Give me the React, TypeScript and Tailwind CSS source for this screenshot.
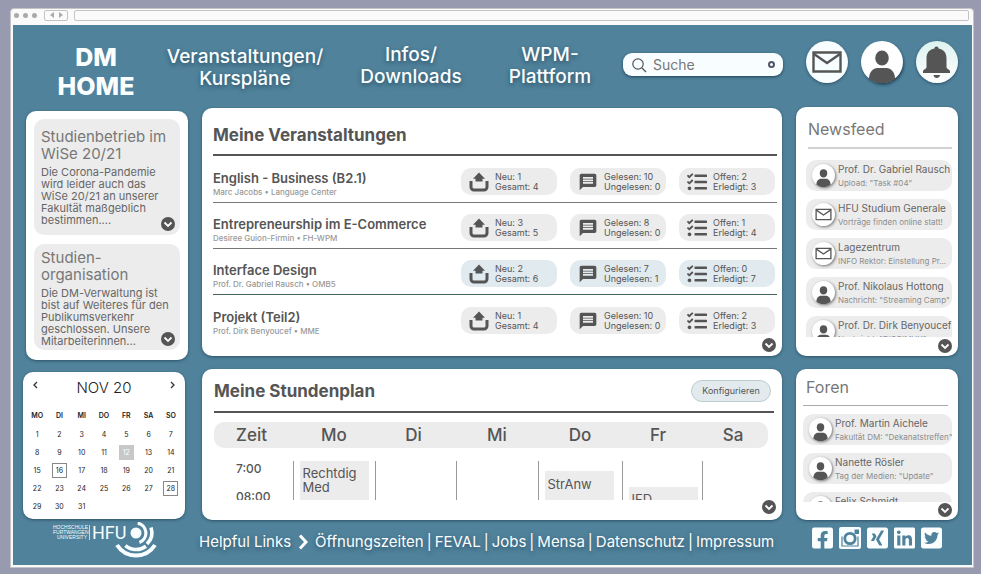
import React from "react";
import { FaFacebookSquare, FaLinkedin, FaTasks, FaTwitterSquare, FaXingSquare } from "react-icons/fa";
import { MdMessage } from "react-icons/md";

const cardClass = "rounded-[10px] bg-white shadow-[0_1px_3px_rgba(20,50,70,0.6)]";

function UserIcon({ className }: { className: string }) {
  return (
    <svg viewBox="0 0 42 42" className={className} aria-hidden="true">
      <ellipse cx="21" cy="17" rx="6.8" ry="7.6" fill="#555" />
      <path d="M8 38c0-7 4-11 8.500-11h9c4.500 0 8.500 4 8.500 11a21 21 0 0 1-26 0z" fill="#555" />
    </svg>
  );
}

function MailIcon({ className }: { className: string }) {
  return (
    <svg viewBox="0 0 42 42" className={className} aria-hidden="true" fill="none" stroke="#555" strokeWidth="2.4">
      <path d="M7.500 11.500h27v19h-27z" />
      <path d="M8 13l13 9L34 13" />
    </svg>
  );
}

function BellIcon({ className }: { className: string }) {
  return (
    <svg viewBox="0 0 42 42" className={className} aria-hidden="true" fill="#555">
      <path d="M20.500 5.500c1.300 0 2 .8 2 2C28 8.500 30.500 12 30.500 17.500V26c0 2 3 2.500 3.500 4v2H7v-2c.5-1.500 3.500-2 3.500-4v-8.500C10.500 12 13 8.500 18.500 7.500c0-1.200.7-2 2-2z" />
      <path d="M17.500 34h6.500c-.3 2-1.600 3-3.200 3s-3-1-3.300-3z" />
    </svg>
  );
}

function UploadIcon() {
  return (
    <svg viewBox="0 0 20 20" className="size-5 shrink-0" aria-hidden="true">
      <path d="M10 0.500l6 6.200h-2.500v2.800h-7V6.700H4z" fill="#555" />
      <path d="M2 9v6a3 3 0 0 0 3 3h10a3 3 0 0 0 3-3V9" fill="none" stroke="#555" strokeWidth="3" />
    </svg>
  );
}

function MoreButton({ label, className = "" }: { label: string; className?: string }) {
  return (
    <button type="button" aria-label={label} className={`flex size-[14px] shrink-0 items-center justify-center rounded-full bg-[#555] ${className}`}>
      <svg viewBox="0 0 14 14" className="size-[14px]" fill="none" stroke="#fff" strokeWidth="1.800" aria-hidden="true">
        <path d="M3.500 5.500L7 9l3.500-3.500" />
      </svg>
    </button>
  );
}

const navItems = [
  { lines: ["Veranstaltungen/", "Kurspläne"], className: "w-[160px] pt-[2px]" },
  { lines: ["Infos/", "Downloads"], className: "w-[172px]" },
  { lines: ["WPM-", "Plattform"], className: "w-[106px]" },
];

function Header() {
  return (
    <header className="flex h-[82px] items-start pl-[14px] pr-[14px] text-[#fbfeff]">
      <a href="#home" className="w-[138px] pt-[18px] text-center text-[25px] font-extrabold leading-[29px]">
        DM
        <br />
        HOME
      </a>
      <nav className="flex pt-[19px] text-center text-[19px] font-medium leading-[22px] [text-shadow:0_2px_4px_rgba(20,50,70,0.6)]">
        {navItems.map((item) => (
          <a key={item.lines[0]} href="#nav" className={item.className}>
            {item.lines[0]}
            <br />
            {item.lines[1]}
          </a>
        ))}
      </nav>
      <label className="ml-5 mt-7 flex h-[23px] min-w-[160px] flex-1 items-center gap-[6px] rounded-[9px] bg-[#f8fdff] px-2 shadow-[0_1px_3px_rgba(20,50,70,0.8)]">
        <svg viewBox="0 0 16 16" className="size-4 shrink-0" fill="none" stroke="#555" strokeWidth="1.200" aria-hidden="true">
          <circle cx="7" cy="7" r="5.200" />
          <path d="M11 11l4 4" />
        </svg>
        <input type="text" aria-label="Suche" placeholder="Suche" className="w-0 flex-1 bg-transparent text-[14px] leading-5 text-[#666] outline-none placeholder:text-[#777]" />
        <span className="size-[7px] rounded-full border-2 border-[#556]" />
      </label>
      <div className="ml-[23px] flex items-center gap-[13px] pt-4">
        <button type="button" aria-label="Nachrichten" className="size-[42px] rounded-full bg-[#f8fdff] shadow-[0_1px_3px_rgba(20,50,70,0.6)]">
          <MailIcon className="size-[42px]" />
        </button>
        <button type="button" aria-label="Profil" className="size-[42px] rounded-full bg-white shadow-[1px_2px_3px_rgba(20,50,70,0.7)]">
          <UserIcon className="size-[42px]" />
        </button>
        <button type="button" aria-label="Mitteilungen" className="size-[42px] rounded-full bg-linear-to-b from-[#dcf2ef] to-white shadow-[0_1px_3px_rgba(20,50,70,0.6)]">
          <BellIcon className="size-[42px]" />
        </button>
      </div>
    </header>
  );
}

const notices = [
  {
    title: ["Studienbetrieb im", "WiSe 20/21"],
    body: ["Die Corona-Pandemie", "wird leider auch das", "WiSe 20/21 an unserer", "Fakultät maßgeblich", "bestimmen...."],
    className: "h-[116px]",
  },
  {
    title: ["Studien-", "organisation"],
    body: ["Die DM-Verwaltung ist", "bist auf Weiteres für den", "Publikumsverkehr", "geschlossen. Unsere", "Mitarbeiterinnen..."],
    className: "h-[106px]",
  },
];

function Notices() {
  return (
    <section className={`flex w-[162px] flex-col gap-[9px] self-end px-2 pb-[10px] pt-2 ${cardClass}`}>
      {notices.map((n, i) => (
        <article key={n.title[0]} className={`relative whitespace-nowrap rounded-[10px] bg-[#ececec] pl-[7px] ${i === 0 ? "pt-[9px]" : "pt-[5px]"} ${n.className}`}>
          <h2 className="text-[15px] leading-[17px] text-[#777]">
            {n.title[0]}
            <br />
            {n.title[1]}
          </h2>
          <p className="pt-1 text-[11px] leading-[12px] text-[#666]">
            {n.body.map((line) => (
              <span key={line} className="block">
                {line}
              </span>
            ))}
          </p>
          <MoreButton label="Mehr lesen" className="absolute bottom-1 right-[5px]" />
        </article>
      ))}
    </section>
  );
}

const weekdays = ["MO", "DI", "MI", "DO", "FR", "SA", "SO"];
const weeks = [0, 1, 2, 3, 4].map((w) => weekdays.map((_, d) => w * 7 + d + 1));

function dayClass(day: number) {
  if (day === 12) return "bg-[#c8c8c8] text-white";
  if (day === 16 || day === 28) return "border border-[#888]";
  return "";
}

function Calendar() {
  return (
    <section className={`h-[147px] w-[162px] self-start px-[3px] pt-[7px] ${cardClass}`}>
      <div className="flex items-start justify-between px-[6px] text-[#222]">
        <button type="button" aria-label="Vorheriger Monat">
          <svg viewBox="0 0 7 12" className="h-3 w-[7px]" fill="none" stroke="#333" strokeWidth="1.300" aria-hidden="true">
            <path d="M5 3L2 6l3 3" />
          </svg>
        </button>
        <h2 className="text-[15px] font-light leading-[18px]">NOV 20</h2>
        <button type="button" aria-label="Nächster Monat">
          <svg viewBox="0 0 7 12" className="h-3 w-[7px]" fill="none" stroke="#333" strokeWidth="1.300" aria-hidden="true">
            <path d="M2 3l3 3-3 3" />
          </svg>
        </button>
      </div>
      <table className="mt-[9px] w-full table-fixed text-center text-[7px] leading-[15px] text-[#222]">
        <thead>
          <tr className="h-[19px]">
            {weekdays.map((d) => (
              <th key={d} className="p-0 font-semibold">{d}</th>
            ))}
          </tr>
        </thead>
        <tbody>
          {weeks.map((week) => (
            <tr key={week[0]} className="h-[18px]">
              {week.map((day) => (
                <td key={day} className="p-0">
                  {day <= 31 && <span className={`mx-auto flex size-[15px] items-center justify-center ${dayClass(day)}`}>{day}</span>}
                </td>
              ))}
            </tr>
          ))}
        </tbody>
      </table>
    </section>
  );
}

const courses = [
  { name: "English - Business (B2.1)", by: "Marc Jacobs • Language Center", neu: 1, total: 4, read: 10, unread: 0, open: 2, done: 3, active: false },
  { name: "Entrepreneurship im E-Commerce", by: "Desiree Guion-Firmin • FH-WPM", neu: 3, total: 5, read: 8, unread: 0, open: 1, done: 4, active: false },
  { name: "Interface Design", by: "Prof. Dr. Gabriel Rausch • OMB5", neu: 2, total: 6, read: 7, unread: 1, open: 0, done: 7, active: true },
  { name: "Projekt (Teil2)", by: "Prof. Dirk Benyoucef • MME", neu: 1, total: 4, read: 10, unread: 0, open: 2, done: 3, active: false },
];

function Stat({ icon, top, bottom, active }: { icon: React.ReactNode; top: string; bottom: string; active: boolean }) {
  return (
    <div className={`flex h-[27px] w-24 items-center rounded-[10px] pl-2 text-[#555] ${active ? "bg-[#e1eaee]" : "bg-[#ececec]"}`}>
      <span className="flex w-[26px] shrink-0">{icon}</span>
      <span className="whitespace-nowrap text-[9px] leading-[10px]">
        {top}
        <br />
        {bottom}
      </span>
    </div>
  );
}

function Courses() {
  return (
    <section className={`flex h-[248px] flex-col pl-[11px] pr-[5px] ${cardClass}`}>
      <h2 className="border-b-2 border-[#555] pb-[9px] pt-[17px] text-[17px] font-bold leading-5 text-[#555]">Meine Veranstaltungen</h2>
      <ul className="pt-[1px]">
        {courses.map((c, i) => (
          <li
            key={c.name}
            className={`flex items-start gap-[13px] pr-[2px] ${i < 3 ? "h-[46px] border-b pt-[11px]" : "h-10 pt-3"} ${c.active ? "border-[#44665f]" : "border-[#777]"}`}
          >
            <div className="min-w-0 flex-1 pt-[2px]">
              <h3 className="text-[13px] font-semibold leading-[16px] text-[#555]">{c.name}</h3>
              <p className="text-[8px] font-medium leading-[13px] text-[#999]">{c.by}</p>
            </div>
            <Stat icon={<UploadIcon />} top={`Neu: ${c.neu}`} bottom={`Gesamt: ${c.total}`} active={c.active} />
            <Stat icon={<MdMessage className="size-5" />} top={`Gelesen: ${c.read}`} bottom={`Ungelesen: ${c.unread}`} active={c.active} />
            <Stat icon={<FaTasks className="size-5" />} top={`Offen: ${c.open}`} bottom={`Erledigt: ${c.done}`} active={c.active} />
          </li>
        ))}
      </ul>
      <MoreButton label="Mehr Veranstaltungen" className="mb-1 mr-[1px] mt-auto self-end" />
    </section>
  );
}

const eventClass = "ml-[6px] w-[69px] bg-[#ececec] pl-[3px] text-[13px] leading-[14px]";

function Timetable() {
  return (
    <section className={`flex h-[151px] flex-col pl-3 ${cardClass}`}>
      <div className="mr-2 flex items-center justify-between border-b-2 border-[#555] pb-[9px] pr-[3px] pt-[11px]">
        <h2 className="text-[17px] font-bold leading-5 text-[#555]">Meine Stundenplan</h2>
        <button type="button" className="h-[22px] w-20 rounded-full border border-[#bccdd0] bg-[#e3eaed] text-[9px] text-[#555]">Konfigurieren</button>
      </div>
      <div className="mr-[14px] mt-[9px] h-[78px] overflow-hidden">
        <table className="w-full table-fixed text-left text-[#555]">
          <thead>
            <tr className="h-[26px] text-center text-[17px] leading-[26px]">
              <th className="w-[79px] rounded-l-[10px] bg-[#ececec] p-0 pr-1 font-medium">Zeit</th>
              <th className="w-[82px] bg-[#ececec] p-0 font-medium">Mo</th>
              <th className="w-[81px] bg-[#ececec] p-0 pr-1 font-medium">Di</th>
              <th className="w-[82px] bg-[#ececec] p-0 font-medium">Mi</th>
              <th className="w-[84px] bg-[#ececec] p-0 font-medium">Do</th>
              <th className="w-[80px] bg-[#ececec] p-0 pr-2 font-medium">Fr</th>
              <th className="w-[66px] rounded-r-[10px] bg-[#ececec] p-0 pr-1 font-medium">Sa</th>
            </tr>
          </thead>
          <tbody>
            <tr className="h-[13px]" />
            <tr className="h-[60px] align-top">
              <td className="p-0 pl-[22px] pt-[1px] text-[12px] font-medium leading-[14px]">
                <div className="h-7">7:00</div>
                <div>08:00</div>
              </td>
              <td className="border-l border-[#999] p-0">
                <div className={`${eventClass} h-[60px] pt-[5px]`}>
                  Rechtdig
                  <br />
                  Med
                </div>
              </td>
              <td className="border-l border-[#999] p-0" />
              <td className="border-l border-[#999] p-0" />
              <td className="border-l border-[#999] p-0 pt-[10px]">
                <div className={`${eventClass} h-[50px] pt-[6px]`}>StrAnw</div>
              </td>
              <td className="border-l border-[#999] p-0 pt-[26px]">
                <div className={`${eventClass} h-[34px] pt-[5px]`}>IFD</div>
              </td>
              <td className="border-l border-[#999] p-0" />
            </tr>
          </tbody>
        </table>
      </div>
      <MoreButton label="Ganzer Stundenplan" className="mb-[6px] mr-[6px] mt-auto self-end" />
    </section>
  );
}

type Entry = { title: string; text: string; mail?: boolean };

const news: Entry[] = [
  { title: "Prof. Dr. Gabriel Rausch", text: 'Upload: "Task #04"' },
  { title: "HFU Studium Generale", text: "Vorträge finden online statt!", mail: true },
  { title: "Lagezentrum", text: "INFO Rektor: Einstellung Pr...", mail: true },
  { title: "Prof. Nikolaus Hottong", text: 'Nachricht: "Streaming Camp"' },
  { title: "Prof. Dr. Dirk Benyoucef", text: 'Nachricht: "DISCIMUX"' },
];

const forums: Entry[] = [
  { title: "Prof. Martin Aichele", text: 'Fakultät DM: "Dekanatstreffen"' },
  { title: "Nanette Rösler", text: 'Tag der Medien: "Update"' },
  { title: "Felix Schmidt", text: "" },
];

function EntryList({ entries, className }: { entries: Entry[]; className: string }) {
  return (
    <ul className={`flex flex-col gap-2 overflow-hidden ${className}`}>
      {entries.map((e) => (
        <li key={e.title} className="flex h-[31px] shrink-0 items-center gap-[3px] whitespace-nowrap rounded-[10px] bg-[#ececec] pl-[6px]">
          <span className="flex size-[23px] shrink-0 items-center justify-center rounded-full bg-white shadow-[1px_1px_3px_rgba(0,0,0,0.5)]">
            {e.mail ? <MailIcon className="size-[23px]" /> : <UserIcon className="size-[23px]" />}
          </span>
          <span>
            <span className="block h-[14px] text-[10px] leading-[12px] text-[#666]">{e.title}</span>
            <span className="block h-3 text-[8px] leading-[12px] text-[#8c8c8c]">{e.text}</span>
          </span>
        </li>
      ))}
    </ul>
  );
}

function Feed() {
  return (
    <section className={`flex h-[249px] flex-col pl-[10px] pr-[6px] ${cardClass}`}>
      <h2 className="ml-[2px] border-b-2 border-[#d2d2d2] pb-2 pt-3 text-[16px] leading-5 text-[#777]">Newsfeed</h2>
      <EntryList entries={news} className="mt-[11px] h-[177px]" />
      <MoreButton label="Mehr Neuigkeiten" className="mb-[3px] mt-auto self-end" />
    </section>
  );
}

function Forums() {
  return (
    <section className={`flex h-[151px] flex-col pl-[7px] pr-[6px] ${cardClass}`}>
      <h2 className="mr-1 border-b border-[#aaa] pb-2 pl-[3px] pt-2 text-[16px] leading-5 text-[#777]">Foren</h2>
      <EntryList entries={forums} className="mt-2 h-[88px]" />
      <MoreButton label="Mehr Foren" className="mb-[3px] mt-auto self-end" />
    </section>
  );
}

function Logo() {
  return (
    <a href="#hfu" aria-label="Hochschule Furtwangen University" className="flex items-start text-[#f8fdff]">
      <span className="mt-[3px] w-[37px] border-r border-[#c5d9e2] pr-[2px] text-right font-['Liberation_Sans',sans-serif] text-[5px] leading-[5px]">
        HOCHSCHULE
        <br />
        FURTWANGEN
        <br />
        UNIVERSITY
      </span>
      <span className="pl-[2px] font-['Roboto',sans-serif] text-[18px] leading-[22px]">HFU</span>
      <svg viewBox="0 0 44 38" className="-ml-[12px] h-[38px] w-[44px] shrink-0" aria-hidden="true" fill="none" stroke="#f8fdff">
        <circle cx="22" cy="11" r="5.500" fill="#f8fdff" stroke="none" />
        <path d="M23.700 1.200A10 10 0 0 1 25.400 20.400" strokeWidth="3.200" />
        <path d="M37 5.500A16 16 0 0 1 33 22" strokeWidth="3.600" />
        <path d="M32 24.200A16.500 16.500 0 0 1 11.400 23.600" strokeWidth="3.600" />
        <path d="M41 23A22.500 22.500 0 0 1 3 23" strokeWidth="4" />
      </svg>
    </a>
  );
}

function InstagramIcon() {
  return (
    <svg viewBox="0 0 22 22" className="size-[22px]" aria-hidden="true">
      <rect width="22" height="22" rx="2" fill="#f8fdff" />
      <path d="M3 9.500V19h16V9.500" fill="none" stroke="#50829b" strokeWidth="1.200" />
      <circle cx="11" cy="11.500" r="5.200" fill="none" stroke="#50829b" strokeWidth="2.800" />
      <rect x="15.500" y="2.500" width="4.500" height="4.500" fill="#50829b" />
    </svg>
  );
}

const links = ["Öffnungszeiten", "FEVAL", "Jobs", "Mensa", "Datenschutz", "Impressum"];

function Footer() {
  return (
    <footer className="flex h-[45px] items-start pl-[40px] pr-[30px] pt-[2px] text-[#fbfeff]">
      <div className="w-[146px] shrink-0">
        <Logo />
      </div>
      <nav className="flex items-center whitespace-nowrap pt-[9px] text-[15px] leading-[22px] [text-shadow:0_2px_4px_rgba(20,50,70,0.6)]">
        <span>Helpful Links</span>
        <svg viewBox="0 0 10 16" className="mx-[7px] h-4 w-[10px]" fill="none" stroke="#fff" strokeWidth="3" aria-hidden="true">
          <path d="M2 1.500L8 8l-6 6.500" />
        </svg>
        {links.map((l, i) => (
          <React.Fragment key={l}>
            {i > 0 && <span className="px-[3px]">|</span>}
            <a href="#link">{l}</a>
          </React.Fragment>
        ))}
      </nav>
      <div className="ml-auto flex items-center gap-[6px] pt-1">
        <a href="#fb" aria-label="Facebook"><FaFacebookSquare className="h-6 w-[21px]" /></a>
        <a href="#ig" aria-label="Instagram"><InstagramIcon /></a>
        <a href="#xing" aria-label="Xing"><FaXingSquare className="h-6 w-[21px]" /></a>
        <a href="#in" aria-label="LinkedIn"><FaLinkedin className="h-6 w-[21px]" /></a>
        <a href="#tw" aria-label="Twitter"><FaTwitterSquare className="h-6 w-[21px]" /></a>
      </div>
    </footer>
  );
}

export default function App() {
  return (
    <div className="min-h-screen bg-[#989bb0] pb-[6px] pl-[10px] pr-[7px] pt-2 font-['Inter',sans-serif]">
      <div className="rounded-t-[4px] border border-[#c4c4c8] bg-[#fafafa] pb-[2px] pl-[2px] pr-[1px]">
        <div className="flex h-4 items-center pb-1 pr-[3px]">
          <div className="flex gap-1 pl-[1px]">
            <span className="size-[5px] rounded-full bg-[#aaa]" />
            <span className="size-[5px] rounded-full bg-[#aaa]" />
            <span className="size-[5px] rounded-full bg-[#aaa]" />
          </div>
          <div className="ml-[7px] flex h-[11px] w-6 items-center justify-center gap-[5px] rounded-[2px] border border-[#c4c4c4]">
            <svg viewBox="0 0 4 6" className="h-[6px] w-1" aria-hidden="true"><path d="M4 0v6L0 3z" fill="#aaa" /></svg>
            <svg viewBox="0 0 4 6" className="h-[6px] w-1" aria-hidden="true"><path d="M0 0v6l4-3z" fill="#aaa" /></svg>
          </div>
          <div className="ml-[6px] h-[11px] flex-1 rounded-[2px] border border-[#c4c4c4]" />
        </div>
        <div className="bg-[#50829b]">
          <Header />
          <main className="flex items-start gap-[14px] pl-[10px] pr-[14px]">
            <div className="flex w-[165px] shrink-0 flex-col gap-3 pt-1">
              <Notices />
              <Calendar />
            </div>
            <div className="flex min-w-0 flex-1 flex-col gap-[13px] pt-[1px]">
              <Courses />
              <Timetable />
            </div>
            <div className="flex w-[162px] shrink-0 flex-col gap-[13px]">
              <Feed />
              <Forums />
            </div>
          </main>
          <Footer />
        </div>
      </div>
    </div>
  );
}
